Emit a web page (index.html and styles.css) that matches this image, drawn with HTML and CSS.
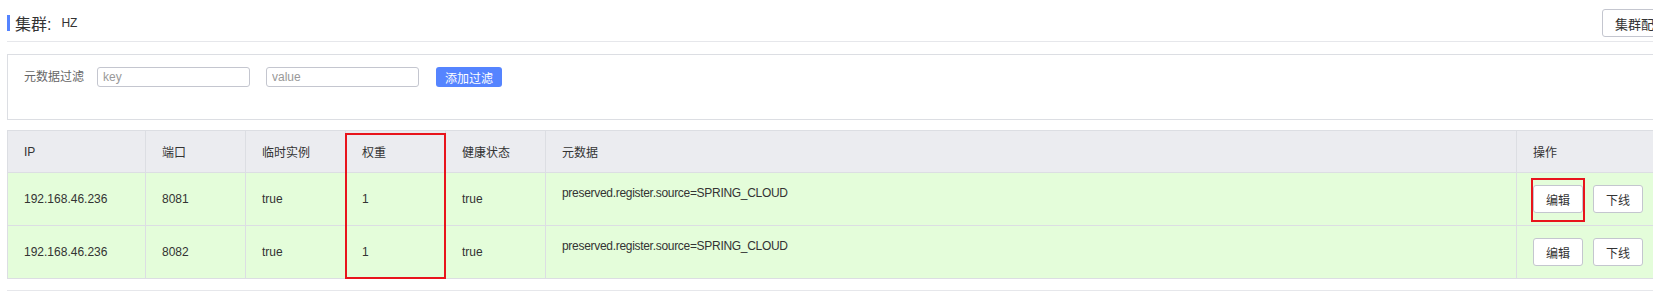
FILE: index.html
```html
<!DOCTYPE html>
<html lang="zh">
<head>
    <meta charset="UTF-8">
    <meta name="viewport" content="width=device-width, initial-scale=1.0">
    <title>实例列表</title>
    <link rel="stylesheet" href="styles.css">
</head>
<body>
    <div class="page">
        <div class="title-row">
            <div class="title">
                <span class="title-bar"></span>
                <span class="title-main">集群:</span>
                <span class="title-sub">HZ</span>
            </div>
            <button class="btn cluster-btn">集群配置</button>
        </div>
        <div class="divider"></div>

        <div class="filter-box">
            <span class="filter-label">元数据过滤</span>
            <input class="filter-input" type="text" placeholder="key">
            <input class="filter-input" type="text" placeholder="value">
            <button class="btn-primary">添加过滤</button>
        </div>

        <div class="table-wrap">
            <table class="instance-table">
                <colgroup>
                    <col style="width: 138px">
                    <col style="width: 100px">
                    <col style="width: 100px">
                    <col style="width: 100px">
                    <col style="width: 100px">
                    <col style="width: 971px">
                    <col style="width: 164px">
                </colgroup>
                <thead>
                    <tr>
                        <th>IP</th>
                        <th>端口</th>
                        <th>临时实例</th>
                        <th>权重</th>
                        <th>健康状态</th>
                        <th>元数据</th>
                        <th>操作</th>
                    </tr>
                </thead>
                <tbody>
                    <tr>
                        <td>192.168.46.236</td>
                        <td>8081</td>
                        <td>true</td>
                        <td>1</td>
                        <td>true</td>
                        <td class="meta-cell">preserved.register.source=SPRING_CLOUD</td>
                        <td>
                            <div class="actions">
                                <button class="btn small-btn">编辑</button>
                                <button class="btn small-btn">下线</button>
                            </div>
                        </td>
                    </tr>
                    <tr>
                        <td>192.168.46.236</td>
                        <td>8082</td>
                        <td>true</td>
                        <td>1</td>
                        <td>true</td>
                        <td class="meta-cell">preserved.register.source=SPRING_CLOUD</td>
                        <td>
                            <div class="actions">
                                <button class="btn small-btn">编辑</button>
                                <button class="btn small-btn">下线</button>
                            </div>
                        </td>
                    </tr>
                </tbody>
            </table>
            <!-- 标注框 -->
            <div class="mark mark-weight"></div>
            <div class="mark mark-edit"></div>
        </div>

        <div class="bottom-line"></div>
    </div>
</body>
</html>
```

FILE: styles.css
```css
:root {
    --primary-color: #5584ff;
    --text-color: #333333;
    --label-color: #666666;
    --border-color: #dcdee3;
    --line-color: #e6e7eb;
    --header-bg: #ebecf0;
    --row-bg: #e4fdda;
    --btn-border: #c4c6cf;
    --mark-color: #e8141c;
}

html, body {
    overflow: hidden;
}

body {
    margin: 0;
    background: white;
    color: var(--text-color);
    font-family: "Liberation Sans", Arial, "Noto Sans CJK SC", sans-serif;
    font-size: 12px;
}

.page {
    width: 1673px;
    padding-left: 7px;
}

.title-row {
    display: flex;
    align-items: center;
    justify-content: space-between;
    height: 28px;
    margin-top: 9px;
}

.title {
    display: flex;
    align-items: center;
}

.title-bar {
    display: inline-block;
    width: 3px;
    height: 16px;
    background: var(--primary-color);
    margin-right: 5px;
}

.title-main {
    font-size: 16px;
    color: var(--text-color);
}

.title-sub {
    font-size: 12px;
    margin-left: 10px;
    color: var(--text-color);
}

.btn {
    font-family: inherit;
    font-size: 12px;
    color: var(--text-color);
    background: white;
    border: 1px solid var(--btn-border);
    border-radius: 3px;
    height: 28px;
    padding: 0 12px;
    cursor: pointer;
}

.cluster-btn {
    width: 78px;
    font-size: 13px;
}

.divider {
    height: 1px;
    background: var(--line-color);
    margin-top: 4px;
}

.filter-box {
    display: flex;
    align-items: flex-start;
    margin-top: 12px;
    height: 66px;
    padding: 12px 16px 0 16px;
    box-sizing: border-box;
    border: 1px solid var(--border-color);
}

.filter-label {
    line-height: 20px;
    color: var(--label-color);
    margin-right: 13px;
}

.filter-input {
    width: 153px;
    height: 20px;
    box-sizing: border-box;
    border: 1px solid var(--btn-border);
    border-radius: 3px;
    padding: 0 5px;
    margin-right: 16px;
    font-family: inherit;
    font-size: 12px;
    color: var(--text-color);
}

.filter-input::placeholder {
    color: #999999;
}

.btn-primary {
    width: 66px;
    height: 20px;
    margin-left: 1px;
    padding: 0;
    border: none;
    border-radius: 3px;
    background: var(--primary-color);
    color: white;
    font-family: inherit;
    font-size: 12px;
}

.table-wrap {
    position: relative;
    margin-top: 10px;
}

.instance-table {
    width: 100%;
    table-layout: fixed;
    border-collapse: collapse;
}

.instance-table th,
.instance-table td {
    border: 1px solid var(--border-color);
    padding: 0 16px;
    text-align: left;
    color: var(--text-color);
}

.instance-table th {
    height: 41px;
    background: var(--header-bg);
    font-weight: normal;
}

.instance-table td {
    height: 52px;
    background: var(--row-bg);
}

.instance-table td.meta-cell {
    vertical-align: top;
    padding-top: 12px;
    line-height: 16px;
    letter-spacing: -0.3px;
    box-sizing: border-box;
}

.actions {
    display: flex;
    gap: 10px;
}

.small-btn {
    width: 50px;
    padding: 0;
}

.mark {
    position: absolute;
    border: 2px solid var(--mark-color);
    box-sizing: border-box;
    pointer-events: none;
}

.mark-weight {
    left: 338px;
    top: 3px;
    width: 101px;
    height: 146px;
}

.mark-edit {
    left: 1524px;
    top: 48px;
    width: 54px;
    height: 44px;
}

.bottom-line {
    height: 1px;
    background: var(--line-color);
    margin-top: 11px;
}
```
